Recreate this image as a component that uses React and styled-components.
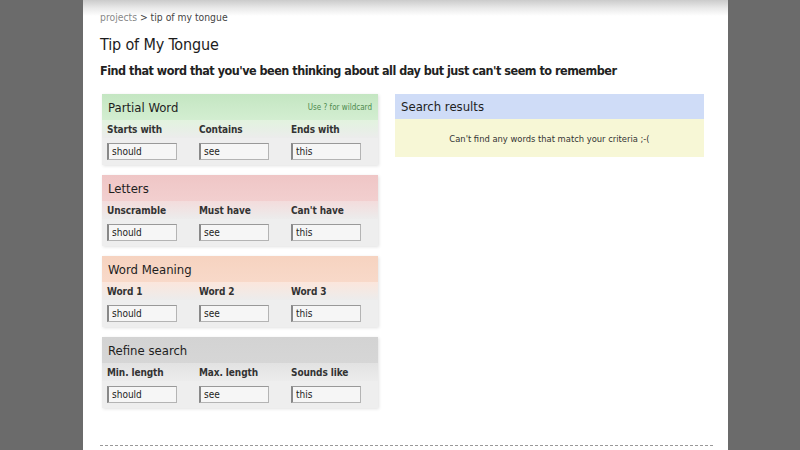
import styled, { createGlobalStyle } from "styled-components";

const FONT = `"DejaVu Sans Condensed", "DejaVu Sans", Verdana, sans-serif`;

const GlobalStyle = createGlobalStyle`
  html, body {
    margin: 0;
    padding: 0;
    background: #6b6b6b;
  }
  body {
    font-family: ${FONT};
    font-stretch: condensed;
    color: #222;
  }
`;

const PageUI = styled.div`
  width: 645px;
  min-height: 450px;
  margin-left: 83px;
  background: linear-gradient(#cbcbcb 0px, #e9e9e9 8px, #fff 16px);
  box-sizing: border-box;
  padding: 9px 15px 0 17px;
`;

const CrumbsUI = styled.div`
  font-size: 10.3px;
  color: #444;
  height: 16px;
  line-height: 16px;

  a {
    color: #888;
    text-decoration: none;
  }
`;

const TitleUI = styled.h1`
  margin: 9px 0 0;
  font-size: 16px;
  font-weight: normal;
  line-height: 22px;
  letter-spacing: -0.15px;
  color: #1c1c1c;
`;

const LeadUI = styled.p`
  margin: 5px 0 0;
  font-size: 12.5px;
  font-weight: bold;
  line-height: 20px;
  letter-spacing: -0.5px;
  color: #222;
`;

const ColumnsUI = styled.div`
  display: flex;
  gap: 17px;
  margin-top: 13px;
  padding-left: 2px;
`;

const StackUI = styled.div`
  width: 276px;
  display: flex;
  flex-direction: column;
  gap: 10px;
`;

const PanelUI = styled.div`
  background: #eeeeee;
  box-shadow: 1px 1px 3px rgba(0, 0, 0, 0.12);
`;

const HeadUI = styled.div`
  height: 26px;
  display: flex;
  align-items: center;
  justify-content: space-between;
  padding: 0 6px;
  background: linear-gradient(${(p) => p.$top}, ${(p) => p.$bottom});
  font-size: 13px;
  color: #1e1e1e;
`;

const HintUI = styled.span`
  font-size: 8px;
  color: #4d8a4d;
`;

const FieldsUI = styled.div`
  display: grid;
  grid-template-columns: repeat(3, 92px);
  padding: 0 0 0 5px;
`;

const LabelsUI = styled(FieldsUI)`
  height: 18px;
  align-items: center;
  background: linear-gradient(${(p) => p.$top}, #ececec);
  font-size: 10px;
  font-weight: bold;
  letter-spacing: -0.1px;
  color: #333;
`;

const InputsUI = styled(FieldsUI)`
  height: 27px;
  align-items: center;
`;

const InputUI = styled.input`
  width: 70px;
  height: 17px;
  box-sizing: border-box;
  margin: 0;
  padding: 0 3px;
  border: 1px solid #b4b4b4;
  border-left: 2px solid #888;
  border-top-color: #999;
  background: #f6f6f6;
  font-family: ${FONT};
  font-stretch: condensed;
  font-size: 10px;
  color: #222;
  outline: none;
`;

const ResultsUI = styled.div`
  width: 309px;
  align-self: flex-start;
`;

const ResultsHeadUI = styled.div`
  height: 25px;
  display: flex;
  align-items: center;
  padding: 0 6px;
  background: #cfdcf7;
  font-size: 13px;
  color: #1e1e1e;
`;

const ResultsBodyUI = styled.div`
  height: 38px;
  display: flex;
  align-items: center;
  justify-content: center;
  background: #f7f7d6;
  font-size: 9.3px;
  color: #333;
`;

const RuleUI = styled.div`
  margin-top: 37px;
  border-top: 1px dashed #999;
`;

const panels = [
  {
    title: "Partial Word",
    hint: "Use ? for wildcard",
    top: "#c4e6c2",
    bottom: "#d3eed1",
    soft: "#e2f3df",
    labels: ["Starts with", "Contains", "Ends with"],
  },
  {
    title: "Letters",
    top: "#efc6c6",
    bottom: "#f2cfcf",
    soft: "#f3dcdc",
    labels: ["Unscramble", "Must have", "Can't have"],
  },
  {
    title: "Word Meaning",
    top: "#f6d3c0",
    bottom: "#f8d9c9",
    soft: "#fbe6dc",
    labels: ["Word 1", "Word 2", "Word 3"],
  },
  {
    title: "Refine search",
    top: "#d3d3d3",
    bottom: "#d6d6d6",
    soft: "#e2e2e2",
    labels: ["Min. length", "Max. length", "Sounds like"],
  },
];

const values = ["should", "see", "this"];

export default function App() {
  return (
    <>
      <GlobalStyle />
      <PageUI>
        <CrumbsUI>
          <a href="#">projects</a> &gt; tip of my tongue
        </CrumbsUI>
        <TitleUI>Tip of My Tongue</TitleUI>
        <LeadUI>
          Find that word that you've been thinking about all day but just can't seem to remember
        </LeadUI>

        <ColumnsUI>
          <StackUI>
            {panels.map((panel) => (
              <PanelUI key={panel.title}>
                <HeadUI $top={panel.top} $bottom={panel.bottom}>
                  {panel.title}
                  {panel.hint && <HintUI>{panel.hint}</HintUI>}
                </HeadUI>
                <LabelsUI $top={panel.soft}>
                  {panel.labels.map((l) => (
                    <span key={l}>{l}</span>
                  ))}
                </LabelsUI>
                <InputsUI>
                  {values.map((v) => (
                    <InputUI key={v} defaultValue={v} />
                  ))}
                </InputsUI>
              </PanelUI>
            ))}
          </StackUI>

          <ResultsUI>
            <ResultsHeadUI>Search results</ResultsHeadUI>
            <ResultsBodyUI>Can't find any words that match your criteria ;-(</ResultsBodyUI>
          </ResultsUI>
        </ColumnsUI>

        <RuleUI />
      </PageUI>
    </>
  );
}
